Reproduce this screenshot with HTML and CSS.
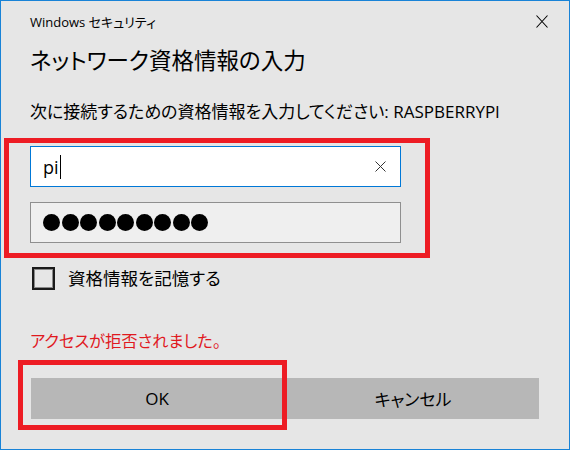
FILE: index.html
```html
<!DOCTYPE html>
<html lang="ja">
<head>
<meta charset="utf-8">
<title>Windows セキュリティ</title>
<link rel="stylesheet" href="styles.css">
</head>
<body>
<div class="window">
  <div class="titlebar">
    <span class="title">Windows セキュリティ</span>
    <svg class="close" width="12" height="13" viewBox="0 0 12 13"><path d="M0.5 0.5 L11.5 12.5 M11.5 0.5 L0.5 12.5" stroke="#000" stroke-width="1.1" fill="none"/></svg>
  </div>
  <h1 class="heading">ネットワーク資格情報の入力</h1>
  <p class="prompt">次に接続するための資格情報を入力してください: RASPBERRYPI</p>
  <div class="field field-user">
    <span class="value">pi</span><span class="caret"></span>
    <svg class="clear" width="11" height="11" viewBox="0 0 11 11"><path d="M0.5 0.5 L10.5 10.5 M10.5 0.5 L0.5 10.5" stroke="#333" stroke-width="1" fill="none"/></svg>
  </div>
  <div class="field field-pass">
    <span class="dot"></span><span class="dot"></span><span class="dot"></span><span class="dot"></span><span class="dot"></span><span class="dot"></span><span class="dot"></span><span class="dot"></span><span class="dot"></span>
  </div>
  <label class="remember">
    <span class="checkbox"></span>
    <span class="remember-text">資格情報を記憶する</span>
  </label>
  <p class="error">アクセスが拒否されました。</p>
  <div class="buttons">
    <div class="btn">OK</div>
    <div class="btn">キャンセル</div>
  </div>
  <div class="mark mark-fields"></div>
  <div class="mark mark-ok"></div>
</div>
</body>
</html>
```
FILE: styles.css
```css
html, body {
  margin: 0;
  padding: 0;
  background: #e6e6e6;
}
.window {
  position: relative;
  box-sizing: border-box;
  width: 570px;
  height: 450px;
  border: 1px solid #1883d7;
  background: #e6e6e6;
  padding: 0 0 0 29px;
  font-family: "Open Sans", "Noto Sans CJK JP", sans-serif;
  font-feature-settings: "palt";
  color: #000;
}
.titlebar {
  display: flex;
  align-items: center;
  justify-content: space-between;
  height: 41px;
  padding-right: 21px;
}
.title {
  font-size: 13px;
  line-height: 20px;
  color: #000;
}
.close {
  display: block;
}
.heading {
  margin: 4px 0 0;
  font-size: 22.5px;
  font-weight: normal;
  line-height: 30px;
}
.prompt {
  margin: 24px 0 0;
  font-size: 17px;
  line-height: 24px;
}
.field {
  box-sizing: border-box;
  width: 371px;
  height: 41px;
  display: flex;
  align-items: center;
  padding-left: 12px;
}
.field-user {
  margin-top: 22px;
  background: #fff;
  border: 1px solid #0078d7;
  padding-right: 14px;
}
.value {
  font-size: 18px;
  line-height: 24px;
  font-family: "Open Sans", sans-serif;
}
.caret {
  width: 1px;
  height: 24px;
  background: #000;
  margin-left: 1px;
}
.clear {
  margin-left: auto;
  display: block;
}
.field-pass {
  margin-top: 15px;
  background: #efefef;
  border: 1px solid #8f8f8f;
  gap: 1.5px;
}
.dot {
  width: 17px;
  height: 17px;
  border-radius: 50%;
  background: #000;
}
.remember {
  display: flex;
  align-items: center;
  margin-top: 23px;
  height: 24px;
  padding-left: 2px;
}
.checkbox {
  box-sizing: border-box;
  width: 23px;
  height: 23px;
  border: 2px solid #1a1a1a;
  box-shadow: inset 0 0 0 1px #8a8a8a;
  background: #e6e6e6;
}
.remember-text {
  margin-left: 13px;
  font-size: 17.5px;
  line-height: 24px;
}
.error {
  margin: 39px 0 0;
  font-size: 16.3px;
  line-height: 24px;
  color: #e0191f;
}
.buttons {
  display: flex;
  gap: 4px;
  margin-top: 25px;
  padding-left: 1px;
}
.btn {
  width: 252px;
  height: 41px;
  background: #b7b7b7;
  display: flex;
  align-items: center;
  justify-content: center;
  font-size: 17px;
}
.mark {
  position: absolute;
  box-sizing: border-box;
  border: 5px solid #ed1c24;
}
.mark-fields {
  left: 3px;
  top: 137px;
  width: 426px;
  height: 120px;
}
.mark-ok {
  left: 17px;
  top: 359px;
  width: 269px;
  height: 70px;
}
```
